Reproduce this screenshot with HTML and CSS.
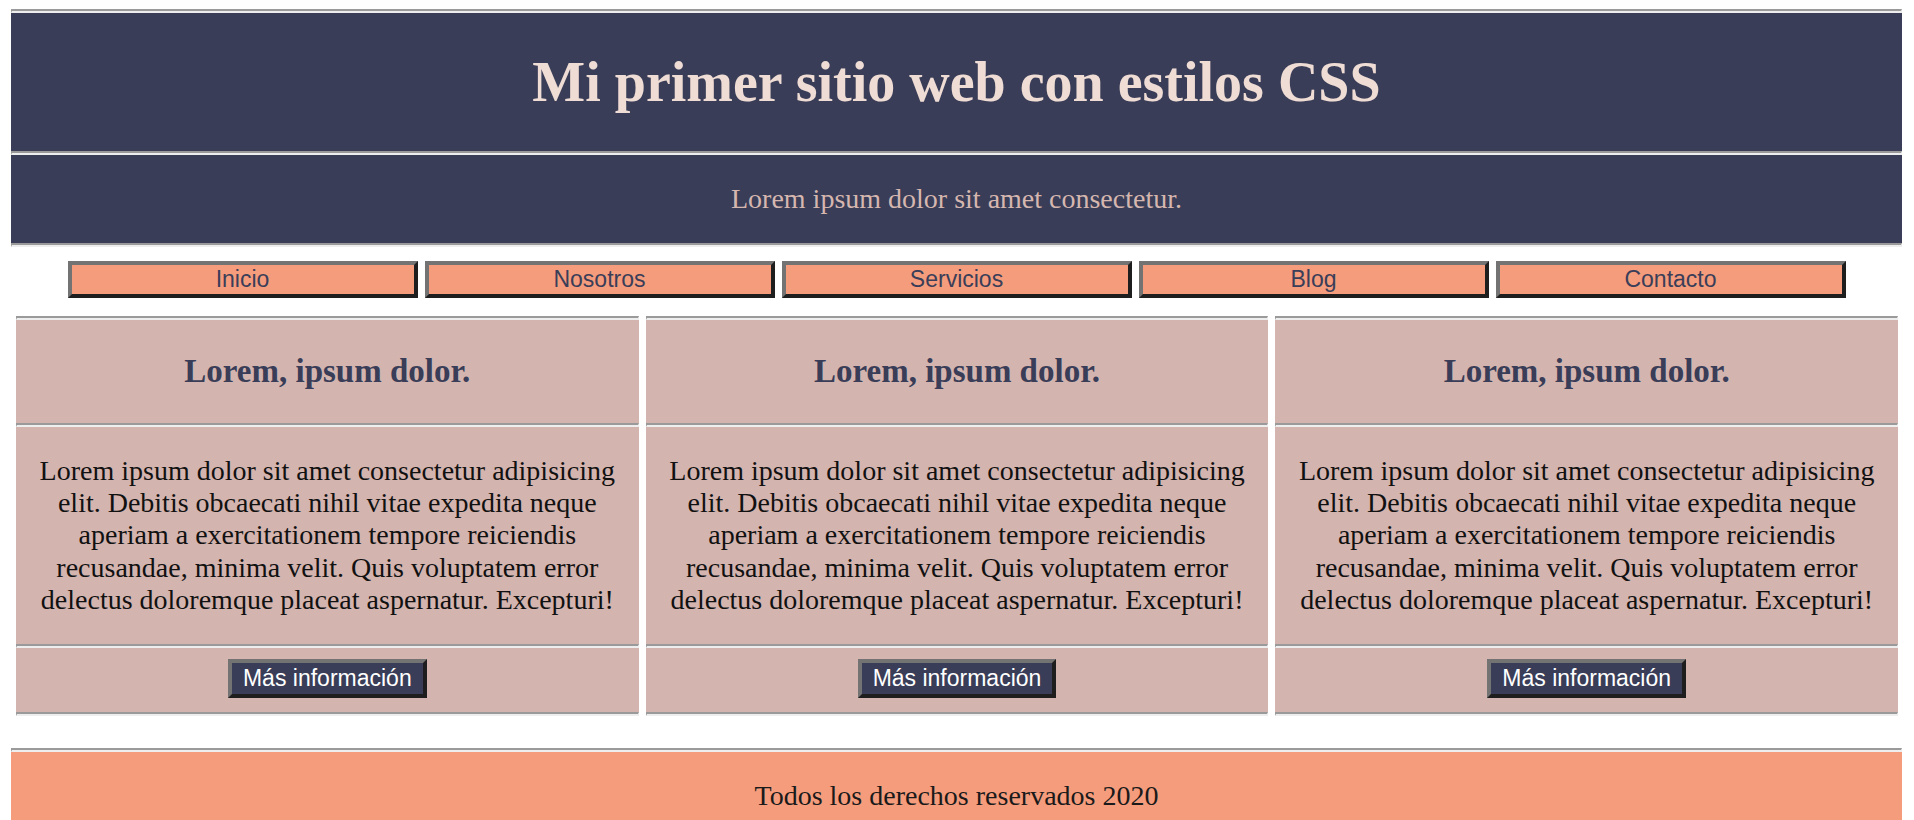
FILE: index.html
```html
<!DOCTYPE html>
<html lang="es">
<head>
<meta charset="utf-8">
<title>Mi primer sitio web con estilos CSS</title>
<link rel="stylesheet" href="styles.css">
</head>
<body>
<div class="page">
  <header class="site-header">
    <hr class="rule">
    <h1 class="site-title">Mi primer sitio web con estilos CSS</h1>
    <hr class="rule">
    <p class="site-subtitle">Lorem ipsum dolor sit amet consectetur.</p>
    <hr class="rule">
  </header>

  <nav class="site-nav">
    <button class="nav-btn">Inicio</button>
    <button class="nav-btn">Nosotros</button>
    <button class="nav-btn">Servicios</button>
    <button class="nav-btn">Blog</button>
    <button class="nav-btn">Contacto</button>
  </nav>

  <main class="cards">
    <article class="card">
      <hr class="rule">
      <h3 class="card-title">Lorem, ipsum dolor.</h3>
      <hr class="rule">
      <p class="card-text">Lorem ipsum dolor sit amet consectetur adipisicing elit. Debitis obcaecati nihil vitae expedita neque aperiam a exercitationem tempore reiciendis recusandae, minima velit. Quis voluptatem error delectus doloremque placeat aspernatur. Excepturi!</p>
      <hr class="rule">
      <div class="card-action"><button class="more-btn">Más información</button></div>
      <hr class="rule">
    </article>
    <article class="card">
      <hr class="rule">
      <h3 class="card-title">Lorem, ipsum dolor.</h3>
      <hr class="rule">
      <p class="card-text">Lorem ipsum dolor sit amet consectetur adipisicing elit. Debitis obcaecati nihil vitae expedita neque aperiam a exercitationem tempore reiciendis recusandae, minima velit. Quis voluptatem error delectus doloremque placeat aspernatur. Excepturi!</p>
      <hr class="rule">
      <div class="card-action"><button class="more-btn">Más información</button></div>
      <hr class="rule">
    </article>
    <article class="card">
      <hr class="rule">
      <h3 class="card-title">Lorem, ipsum dolor.</h3>
      <hr class="rule">
      <p class="card-text">Lorem ipsum dolor sit amet consectetur adipisicing elit. Debitis obcaecati nihil vitae expedita neque aperiam a exercitationem tempore reiciendis recusandae, minima velit. Quis voluptatem error delectus doloremque placeat aspernatur. Excepturi!</p>
      <hr class="rule">
      <div class="card-action"><button class="more-btn">Más información</button></div>
      <hr class="rule">
    </article>
  </main>

  <footer class="site-footer">
    <hr class="rule">
    <p class="footer-text">Todos los derechos reservados 2020</p>
  </footer>
</div>
</body>
</html>
```

FILE: styles.css
```css
html, body {
  margin: 0;
  padding: 0;
  background: #ffffff;
}

body {
  font-family: "Liberation Serif", "Times New Roman", serif;
  font-size: 28px;
  color: #111111;
}

.page {
  padding: 9px 12px 0 11px;
}

.rule {
  display: block;
  height: 0;
  margin: 0;
  border-style: solid;
  border-width: 2px 1px 2px 1px;
  border-color: #9a9a9a #eeeeee #eeeeee #9a9a9a;
}

/* Header */
.site-header {
  background: #393d57;
}

.site-title {
  margin: 0;
  padding: 37px 0;
  font-size: 56px;
  line-height: 64px;
  font-weight: bold;
  text-align: center;
  color: #efdcd4;
}

.site-subtitle {
  margin: 0;
  padding: 28px 0;
  font-size: 28px;
  line-height: 32px;
  text-align: center;
  color: #d6b7b0;
}

/* Navigation */
.site-nav {
  display: flex;
  justify-content: center;
  gap: 7px;
  margin-top: 14px;
}

.nav-btn {
  width: 350px;
  height: 37px;
  margin: 0;
  padding: 0 10px;
  font-family: "Liberation Sans", Arial, sans-serif;
  font-size: 23px;
  line-height: 27px;
  color: #3a3e58;
  background: #f59c7c;
  border-style: solid;
  border-width: 4px;
  border-color: #737373 #1e1e1e #1e1e1e #737373;
  text-align: center;
  cursor: pointer;
}

/* Cards */
.cards {
  display: grid;
  grid-template-columns: repeat(3, 1fr);
  gap: 7px;
  margin: 18px 4px 0 5px;
}

.card {
  background: #d4b4af;
}

.card-title {
  margin: 0;
  padding: 33px 0;
  font-size: 33px;
  line-height: 37px;
  font-weight: bold;
  text-align: center;
  color: #393d57;
}

.card-text {
  margin: 0;
  padding: 28px 10px;
  font-size: 28px;
  line-height: 32.2px;
  text-align: center;
  color: #111111;
}

.card-action {
  display: flex;
  justify-content: center;
  padding: 11px 0 14px;
}

.more-btn {
  height: 39px;
  margin: 0;
  padding: 0 11px;
  font-family: "Liberation Sans", Arial, sans-serif;
  font-size: 23px;
  line-height: 29px;
  color: #ffffff;
  background: #393d57;
  border-style: solid;
  border-width: 4px;
  border-color: #737373 #1e1e1e #1e1e1e #737373;
  cursor: pointer;
}

/* Footer */
.site-footer {
  margin-top: 32px;
  background: #f59c7c;
}

.footer-text {
  margin: 0;
  padding: 28px 0;
  font-size: 28px;
  line-height: 32px;
  text-align: center;
  color: #1a1a1a;
}
```
